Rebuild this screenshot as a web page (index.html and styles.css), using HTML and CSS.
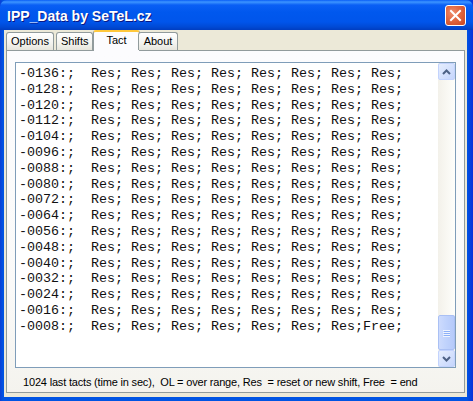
FILE: index.html
```html
<!DOCTYPE html>
<html>
<head>
<meta charset="utf-8">
<link rel="stylesheet" href="styles.css">
</head>
<body>
<div class="window">
  <div class="titlebar">
    <span class="title">IPP_Data by SeTeL.cz</span>
    <span class="close">
      <svg width="13" height="13" viewBox="0 0 13 13"><path d="M2 2 L11 11 M11 2 L2 11" stroke="#fff" stroke-width="2" stroke-linecap="square"/></svg>
    </span>
  </div>
  <div class="client">
    <div class="tabs">
      <div class="tab">Options</div>
      <div class="tab">Shifts</div>
      <div class="tab active">Tact</div>
      <div class="tab">About</div>
    </div>
    <div class="panel">
      <div class="memo">
        <pre class="text">-0136:;  Res; Res; Res; Res; Res; Res; Res; Res;
-0128:;  Res; Res; Res; Res; Res; Res; Res; Res;
-0120:;  Res; Res; Res; Res; Res; Res; Res; Res;
-0112:;  Res; Res; Res; Res; Res; Res; Res; Res;
-0104:;  Res; Res; Res; Res; Res; Res; Res; Res;
-0096:;  Res; Res; Res; Res; Res; Res; Res; Res;
-0088:;  Res; Res; Res; Res; Res; Res; Res; Res;
-0080:;  Res; Res; Res; Res; Res; Res; Res; Res;
-0072:;  Res; Res; Res; Res; Res; Res; Res; Res;
-0064:;  Res; Res; Res; Res; Res; Res; Res; Res;
-0056:;  Res; Res; Res; Res; Res; Res; Res; Res;
-0048:;  Res; Res; Res; Res; Res; Res; Res; Res;
-0040:;  Res; Res; Res; Res; Res; Res; Res; Res;
-0032:;  Res; Res; Res; Res; Res; Res; Res; Res;
-0024:;  Res; Res; Res; Res; Res; Res; Res; Res;
-0016:;  Res; Res; Res; Res; Res; Res; Res; Res;
-0008:;  Res; Res; Res; Res; Res; Res; Res;Free;</pre>
        <div class="scrollbar">
          <div class="sbtn">
            <svg width="9" height="6" viewBox="0 0 9 6"><path d="M1 5 L4.5 1.5 L8 5" fill="none" stroke="#4d6185" stroke-width="2"/></svg>
          </div>
          <div class="track"></div>
          <div class="thumb">
            <svg width="7" height="8" viewBox="0 0 7 8"><path d="M0 1.5H7M0 3.5H7M0 5.5H7M0 7.5H7" stroke="#eef3fe" stroke-width="1"/><path d="M1 2.5H8M1 4.5H8M1 6.5H8" stroke="#8cb0f8" stroke-width="1"/></svg>
          </div>
          <div class="sbtn">
            <svg width="9" height="6" viewBox="0 0 9 6"><path d="M1 1 L4.5 4.5 L8 1" fill="none" stroke="#4d6185" stroke-width="2"/></svg>
          </div>
        </div>
      </div>
      <div class="status">1024 last tacts (time in sec),  OL = over range, Res  = reset or new shift, Free  = end</div>
    </div>
  </div>
</div>
</body>
</html>
```

FILE: styles.css
```css
* { box-sizing: border-box; }
html, body { margin: 0; padding: 0; }
body { width: 473px; height: 401px; overflow: hidden; background: #0831d9; }

.window {
  width: 473px;
  height: 401px;
  display: flex;
  flex-direction: column;
  background: linear-gradient(to right, #0a3fd6 0, #0054e3 3px, #0054e3 calc(100% - 6px), #0831d9 100%);
  padding: 0 6px 4px 4px;
}

.titlebar {
  height: 30px;
  margin: 0 -6px 0 -4px;
  padding: 0 7px 0 7px;
  display: flex;
  align-items: center;
  justify-content: space-between;
  background: linear-gradient(to bottom, #0a5ef6 0, #3d95ff 2px, #0a5ff5 5px, #0058ee 12px, #0055eb 22px, #0049d4 27px, #003dc0 30px);
  border-radius: 7px 7px 0 0;
}
.title {
  font-family: "Liberation Sans", Arial, sans-serif;
  font-weight: bold;
  font-size: 14px;
  color: #fff;
  text-shadow: 1px 1px 0 #0a1883;
  margin-top: 1px;
}
.close {
  width: 21px;
  height: 21px;
  border: 1px solid #fff;
  border-radius: 3px;
  background: radial-gradient(circle at 35% 35%, #ef8e6f 0, #e26a44 40%, #c9441f 100%);
  display: flex;
  align-items: center;
  justify-content: center;
}

.client {
  flex: 1;
  background: #ece9d8;
  display: flex;
  flex-direction: column;
  padding: 0 2px 4px 2px;
}

.tabs {
  display: flex;
  height: 20px;
  align-items: flex-end;
  padding-left: 0;
  position: relative;
  z-index: 1;
}
.tab {
  font-family: "Liberation Sans", Arial, sans-serif;
  font-size: 11px;
  color: #000;
  height: 18px;
  padding: 0 4px;
  line-height: 17px;
  border: 1px solid #919b9c;
  border-bottom: none;
  border-radius: 3px 3px 0 0;
  background: linear-gradient(to bottom, #fff 0, #f3f3ef 60%, #e6e5dc 100%);
  margin-right: 2px;
}
.tab.active {
  height: 21px;
  padding: 0 12px;
  margin: 0 0 -1px -2px;
  background: #fcfcfe;
  border-top: 2px solid #ffc83c;
  line-height: 17px;
}
.tab.active + .tab { margin-left: -2px; padding: 0 5px; }

.panel {
  flex: 1;
  border: 1px solid #919b9c;
  background: linear-gradient(to bottom, #fcfcfe 0, #fafaf9 70%, #f4f3ee 100%);
  display: flex;
  flex-direction: column;
  padding: 11px 8px 0 8px;
}

.memo {
  height: 306px;
  border: 1px solid #7f9db9;
  background: #fff;
  display: flex;
}
.text {
  flex: 1;
  margin: 0;
  padding: 3px 0 0 3px;
  font-family: "Liberation Mono", "Courier New", monospace;
  font-size: 13.33px;
  line-height: 15.8px;
  color: #111;
  overflow: hidden;
}

.scrollbar {
  width: 17px;
  display: flex;
  flex-direction: column;
  background: #f5f4ee;
}
.sbtn {
  height: 17px;
  border: 1px solid #c3d3fd;
  border-radius: 2px;
  background: linear-gradient(135deg, #e6eefe 0, #c5d5fc 100%);
  display: flex;
  align-items: center;
  justify-content: center;
}
.track { flex: 1; background: linear-gradient(to right, #f3f1ea, #fefefb); }
.thumb {
  height: 35px;
  border: 1px solid #aac0f4;
  border-radius: 2px;
  background: linear-gradient(to right, #cddbfd 0, #bfd2fc 50%, #b6cafa 100%);
  display: flex;
  align-items: center;
  justify-content: center;
}

.status {
  font-family: "Liberation Sans", Arial, sans-serif;
  font-size: 11px;
  letter-spacing: -0.18px;
  white-space: pre;
  color: #000;
  padding: 8px 0 0 8px;
}
```
